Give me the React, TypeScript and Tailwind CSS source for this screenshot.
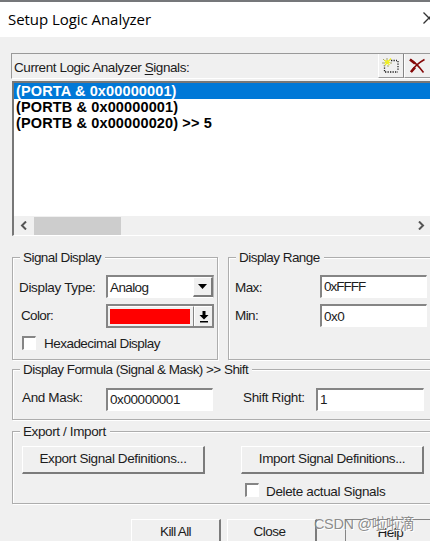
import React from 'react'
import clsx from 'clsx'

const signals = ['(PORTA & 0x00000001)', '(PORTB & 0x00000001)', '(PORTB & 0x00000020) >> 5']

interface BoxProps {
  className?: string
  children?: React.ReactNode
}

interface GroupProps extends BoxProps {
  title: string
  titleClassName?: string
}

/** Etched group box with its caption sitting on the top edge. */
function Group({ title, titleClassName, className, children }: GroupProps) {
  return (
    <section
      className={clsx(
        'relative shrink-0 border border-[#adadad] shadow-[1px_1px_0_#fff,inset_1px_1px_0_#fff]',
        className,
      )}
    >
      <h2
        className={clsx(
          'absolute -top-[9px] left-[7px] h-[18px] bg-[#f0f0f0] pr-1 pl-[3px] leading-[18px]',
          titleClassName,
        )}
      >
        {title}
      </h2>
      {children}
    </section>
  )
}

function Field({ className, children }: BoxProps) {
  return (
    <div
      className={clsx(
        'shrink-0 border-t-2 border-r border-b border-l-2 border-t-[#858585] border-r-white border-b-white border-l-[#858585] bg-white pl-[2px]',
        className,
      )}
    >
      {children}
    </div>
  )
}

function PushButton({ className, children }: BoxProps) {
  return (
    <button
      className={clsx(
        'shrink-0 border-t border-r-2 border-b-2 border-l border-t-white border-r-[#7b7b7b] border-b-[#7b7b7b] border-l-white text-center',
        className,
      )}
    >
      {children}
    </button>
  )
}

function Checkbox() {
  return (
    <span className="h-[14px] w-[14px] shrink-0 border-t-2 border-r border-b border-l-2 border-t-[#858585] border-r-white border-b-white border-l-[#858585] bg-white" />
  )
}

function NewIcon() {
  return (
    <svg width="18" height="17" viewBox="0 0 18 17" className="block">
      <path d="M9 3.500h6M16 4v9M3 15h13M2.500 8v7" stroke="#222" strokeWidth="1.3" strokeDasharray="1.300 1.200" fill="none" />
      <path d="M1 2l2 2M5 1v3M9 2L7 4M0 6h3M8 6h2M2 9l2-2M6 8v2" stroke="#a5a56a" strokeWidth="1" />
      <path d="M2.500 3l5 5M9 1.500L3 8M5.500 3v4M3 5.500h5" stroke="#eeee20" strokeWidth="1.2" />
    </svg>
  )
}

function DeleteIcon() {
  return (
    <svg width="17" height="16" viewBox="0 0 17 16" className="block">
      <path d="M1 1.500c4 2 9 7 13.500 13M15.500 1.500C10 4.500 5 9 2 14" stroke="#850808" strokeWidth="1.6" fill="none" />
      <path d="M1 1.500l5 4M6 9.500l-4 4.500" stroke="#850808" strokeWidth="2.600" />
    </svg>
  )
}

export default function App() {
  return (
    <main className="relative flex h-[541px] w-[430px] flex-col overflow-hidden bg-[#f0f0f0] font-['Liberation_Sans',Arial,sans-serif] text-[13.5px] whitespace-nowrap text-[#1c1c1c]">
      <header className="flex h-[37px] shrink-0 justify-between border-t-2 border-[#75777a] bg-white pl-2">
        <h1 className="pt-[5px] font-['Open_Sans','Noto_Sans',sans-serif] text-[15px] leading-[24px] tracking-[-0.05px] text-black">
          Setup Logic Analyzer
        </h1>
        <svg width="7" height="13" viewBox="0 0 7 13" className="mt-[10px]">
          <path d="M0.500 0.500l11 11M0.500 11.500l11-11" stroke="#333" strokeWidth="1.3" />
        </svg>
      </header>

      <div className="mt-4 ml-[11px] flex h-[26px] shrink-0 border-t border-b border-l border-t-[#999] border-b-white border-l-[#999]">
        <div className="w-[368px] pl-[2px] leading-[27px] tracking-[-0.42px]">
          Current Logic Analyzer <u className="underline-offset-2">S</u>ignals:
        </div>
        <div className="flex h-6 w-[26px] items-center justify-center border-r border-b border-l border-r-[#858585] border-b-[#999] border-l-white">
          <NewIcon />
        </div>
        <div className="flex h-6 w-[26px] items-center border-b border-l border-b-[#999] border-l-white pl-[4px]">
          <DeleteIcon />
        </div>
      </div>

      <div className="mt-[2px] ml-[12px] flex h-[155px] shrink-0 flex-col border-t-2 border-b border-l-2 border-t-[#777] border-b-white border-l-[#777] bg-white">
        <ul className="grow text-[14.5px] font-bold text-black">
          {signals.map((signal, i) => (
            <li
              key={signal}
              className={clsx('h-4 pl-[2px] leading-[17px] tracking-[0.13px]', i === 0 && 'bg-[#0078d7] text-white')}
            >
              {signal}
            </li>
          ))}
        </ul>
        <div className="flex h-[19px] items-center justify-between bg-[#f0f0f0] pr-[5px] pl-[6px]">
          <div className="flex items-center gap-[7px]">
            <svg width="7" height="9" viewBox="0 0 7 9">
              <path d="M6 0.500L2 4.500l4 4" stroke="#555" strokeWidth="2" fill="none" />
            </svg>
            <div className="h-[18px] w-[87px] bg-[#cdcdcd]" />
          </div>
          <svg width="7" height="9" viewBox="0 0 7 9">
            <path d="M1 0.500l4 4-4 4" stroke="#555" strokeWidth="2" fill="none" />
          </svg>
        </div>
      </div>

      <div className="mt-[21px] ml-[12px] flex shrink-0 gap-[10px]">
        <Group title="Signal Display" titleClassName="tracking-[-0.55px]" className="h-[103px] w-[206px] pt-[17px]">
          <div className="flex h-[24px]">
            <div className="w-[93px] pl-[6px] leading-[25px] tracking-[-0.33px]">Display Type:</div>
            <div className="flex h-[23px] w-[108px] border-t-2 border-r border-b border-l-2 border-t-[#858585] border-r-[#bbb] border-b-white border-l-[#858585] bg-white">
              <span className="grow pl-[2px] leading-[21px] tracking-[-0.6px]">Analog</span>
              <span className="flex w-[20px] items-center justify-center border-t border-r-2 border-b-2 border-l border-t-white border-r-[#7b7b7b] border-b-[#7b7b7b] border-l-white bg-[#f0f0f0]">
                <svg width="9" height="5" viewBox="0 0 9 5">
                  <path d="M0 0h9L4.500 5z" fill="#000" />
                </svg>
              </span>
            </div>
          </div>
          <div className="mt-[5px] flex h-[24px]">
            <div className="w-[93px] pl-[8px] leading-[24px] tracking-[-0.65px]">Color:</div>
            <div className="flex h-[24px] w-[108px] border-2 border-[#858585]">
              <span className="flex grow items-center border-t border-r border-t-white border-r-[#858585] pl-[2px]">
                <span className="h-[15px] w-[80px] bg-[#ff0000]" />
              </span>
              <span className="flex w-[18px] items-center justify-center border-t border-l border-white">
                <svg width="10" height="12" viewBox="0 0 10 12">
                  <path d="M3.500 0h3v4h3L5 8.500 0.500 4h3zM1 10h8v1.500H1z" fill="#000" />
                </svg>
              </span>
            </div>
          </div>
          <div className="mt-[8px] flex pl-[9px]">
            <Checkbox />
            <span className="ml-2 leading-[16px] tracking-[-0.53px]">Hexadecimal Display</span>
          </div>
        </Group>

        <Group title="Display Range" titleClassName="tracking-[-0.54px]" className="h-[103px] w-[212px] pt-[17px]">
          <div className="flex h-[29px]">
            <span className="w-[91px] pl-[6px] leading-[25px] tracking-[-0.6px]">Max:</span>
            <Field className="h-[23px] w-[107px] leading-[19px] tracking-[-1px]">0xFFFF</Field>
          </div>
          <div className="flex h-[24px]">
            <span className="w-[91px] pl-[6px] leading-[24px] tracking-[-0.6px]">Min:</span>
            <Field className="h-[23px] w-[107px] leading-[21px] tracking-[-0.5px]">0x0</Field>
          </div>
        </Group>
      </div>

      <Group
        title="Display Formula (Signal & Mask) >> Shift"
        titleClassName="tracking-[-0.54px]"
        className="mt-[9px] ml-[12px] flex h-[51px] w-[430px] pt-[18px]"
      >
        <span className="w-[93px] pl-[9px] leading-[20px] tracking-[-0.35px]">And Mask:</span>
        <Field className="h-[23px] w-[107px] leading-[20px] tracking-[-0.43px]">0x00000001</Field>
        <span className="w-[103px] pl-[30px] leading-[20px] tracking-[-0.36px]">Shift Right:</span>
        <Field className="h-[23px] w-[108px] leading-[20px]">1</Field>
      </Group>

      <Group
        title="Export / Import"
        titleClassName="tracking-[-0.38px]"
        className="mt-[11px] ml-[12px] h-[73px] w-[430px] pt-[14px] pl-[9px]"
      >
        <div className="flex gap-[36px]">
          <PushButton className="h-[28px] w-[183px] tracking-[-0.4px]">Export Signal Definitions...</PushButton>
          <PushButton className="h-[28px] w-[183px] tracking-[-0.4px]">Import Signal Definitions...</PushButton>
        </div>
        <div className="mt-[9px] flex pl-[223px]">
          <Checkbox />
          <span className="ml-[7px] leading-[17px] tracking-[-0.36px]">Delete actual Signals</span>
        </div>
      </Group>

      <footer className="mt-[15px] ml-[131px] flex shrink-0">
        <PushButton className="h-[28px] w-[90px] tracking-[-0.65px]">Kill All</PushButton>
        <PushButton className="ml-[6px] h-[28px] w-[90px] pr-[4px] tracking-[-0.5px]">Close</PushButton>
        <button className="ml-[28px] h-[28px] w-[90px] shrink-0 border-t border-l border-[#858585] tracking-[-0.5px]">
          Help
        </button>
      </footer>

      <div className="absolute top-[514px] left-[314px] font-['Liberation_Sans','Noto_Sans_CJK_SC',sans-serif] text-[14.5px] leading-[20px] tracking-[-0.35px] text-[#808080]/90 [text-shadow:1px_1px_0_#fff]">
        CSDN @啦啦滴
      </div>
    </main>
  )
}
